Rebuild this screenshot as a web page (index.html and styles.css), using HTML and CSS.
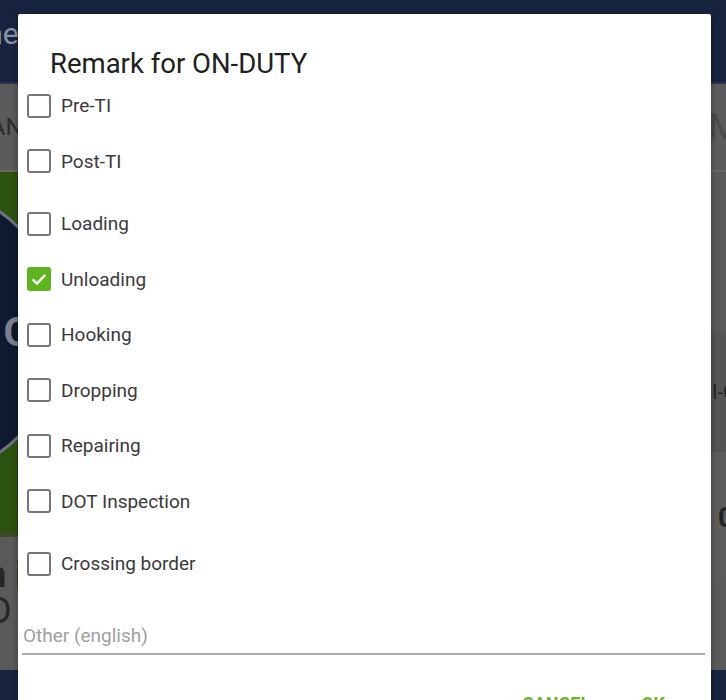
FILE: index.html
```html
<!DOCTYPE html>
<html lang="en">
<head>
    <meta charset="UTF-8">
    <meta name="viewport" content="width=device-width, initial-scale=1.0">
    <title>Remark for ON-DUTY</title>
    <link rel="stylesheet" href="styles.css">
</head>
<body>
    <!-- dimmed app behind the dialog -->
    <div class="app">
        <header class="app-bar">
            <span class="app-title">Home</span>
        </header>
        <div class="tab-bar">
            <span class="tab-left">SCAN</span>
            <span class="tab-right">M</span>
        </div>
        <div class="app-body">
            <div class="status-col">
                <div class="status-panel">
                    <div class="status-circle"><span>OFF</span></div>
                </div>
                <div class="status-info">
                    <span class="info-line big">n i</span>
                    <span class="info-line">-D</span>
                </div>
            </div>
            <div class="side-col">
                <div class="side-block dark"><span>I-C</span></div>
                <div class="side-block"><span class="num">0</span></div>
            </div>
        </div>
        <footer class="app-footer"></footer>
    </div>

    <div class="dialog">
        <h2 class="dialog-title">Remark for ON-DUTY</h2>
        <div class="options">
            <label class="option"><span class="box"></span>Pre-TI</label>
            <label class="option"><span class="box"></span>Post-TI</label>
            <label class="option spaced"><span class="box"></span>Loading</label>
            <label class="option"><span class="box checked">
                <svg viewBox="0 0 24 24" width="24" height="24"><path d="M4.5 12.5l5 5L19.5 7" fill="none" stroke="#fff" stroke-width="2.8"/></svg>
            </span>Unloading</label>
            <label class="option"><span class="box"></span>Hooking</label>
            <label class="option"><span class="box"></span>Dropping</label>
            <label class="option"><span class="box"></span>Repairing</label>
            <label class="option"><span class="box"></span>DOT Inspection</label>
            <label class="option spaced"><span class="box"></span>Crossing border</label>
        </div>
        <div class="other-field">
            <input type="text" placeholder="Other (english)">
        </div>
        <div class="dialog-actions">
            <button type="button">CANCEL</button>
            <button type="button">OK</button>
        </div>
    </div>
</body>
</html>
```

FILE: styles.css
```css
body {
    margin: 0;
    font-family: Roboto, "Liberation Sans", sans-serif;
    overflow: hidden;
    height: 700px;
    position: relative;
    background: #5a5a5a;
}
.app {
    height: 700px;
    display: flex;
    flex-direction: column;
}
.app-bar {
    height: 82px;
    background: #18233f;
    border-bottom: 2px solid #2a3450;
    display: flex;
    align-items: flex-start;
}
.app-title {
    color: #8a93a8;
    font-size: 30px;
    margin: 16px 0 0 -62px;
}
.tab-bar {
    height: 86px;
    background: #5b5b5b;
    border-bottom: 2px solid #666;
    display: flex;
    justify-content: space-between;
    align-items: center;
    color: #2c2c2c;
    font-size: 24px;
}
.tab-left {
    margin-left: -40px;
}
.tab-right {
    color: #4a4a4a;
    font-size: 36px;
    margin-right: -14px;
}
.app-body {
    flex: 1;
    display: flex;
}
.status-col {
    width: 50%;
    display: flex;
    flex-direction: column;
}
.status-panel {
    height: 365px;
    background: #2c520f;
    display: flex;
    align-items: center;
    border-bottom: 5px solid #3c4a2a;
    box-sizing: border-box;
    overflow: hidden;
}
.status-circle {
    width: 290px;
    height: 290px;
    border-radius: 50%;
    background: #0f1a30;
    border: 3px solid #6a7180;
    margin-left: -232px;
    margin-top: -40px;
    display: flex;
    align-items: center;
    justify-content: flex-end;
    color: #7a8090;
    font-size: 40px;
    font-weight: bold;
}
.status-circle span {
    margin-right: -14px;
}
.status-info {
    flex: 1;
    background: #595959;
    display: flex;
    flex-direction: column;
    color: #262626;
    padding-top: 20px;
}
.info-line {
    font-size: 36px;
    margin-left: -22px;
    line-height: 36px;
}
.info-line.big {
    font-weight: bold;
    margin-left: -14px;
}
.side-col {
    flex: 1;
    display: flex;
    flex-direction: column;
}
.side-block {
    height: 130px;
    background: #5c5c5c;
    display: flex;
    align-items: center;
    justify-content: flex-end;
    color: #222;
    font-size: 20px;
}
.side-block.dark {
    height: 120px;
    margin-top: 160px;
    background: #545454;
}
.side-block span {
    margin-right: -10px;
}
.side-block .num {
    font-size: 28px;
    font-weight: bold;
    margin-right: -8px;
}
.app-footer {
    height: 30px;
    background: #18233f;
}

/* dialog */
.dialog {
    position: absolute;
    left: 18px;
    top: 14px;
    width: 693px;
    height: 740px;
    background: #fff;
    border-radius: 2px;
    box-shadow: 0 2px 6px rgba(0, 0, 0, 0.4);
    padding-top: 36px;
    box-sizing: border-box;
}
.dialog-title {
    margin: 0 0 0 32px;
    font-size: 27.5px;
    font-weight: normal;
    line-height: 28px;
    color: #212121;
}
.options {
    display: flex;
    flex-direction: column;
    padding-left: 9px;
}
.option {
    height: 55.5px;
    display: flex;
    align-items: center;
    gap: 10px;
    font-size: 19px;
    color: #3a3a3a;
}
.option.spaced {
    margin-top: 7px;
}
.box {
    width: 20px;
    height: 20px;
    border: 2px solid #777;
    border-radius: 3px;
    display: flex;
    align-items: center;
    justify-content: center;
}
.box.checked {
    background: #5db41e;
    border-color: #5db41e;
}
.other-field {
    margin: 27px 6px 0 4px;
}
.other-field input {
    width: 100%;
    height: 36px;
    border: none;
    border-bottom: 2px solid #ababab;
    padding: 0 1px;
    font-family: inherit;
    font-size: 19px;
    outline: none;
    box-sizing: border-box;
}
.other-field input::placeholder {
    color: #a0a0a0;
}
.dialog-actions {
    display: flex;
    justify-content: flex-end;
    gap: 39px;
    padding: 38px 40px 0 0;
}
.dialog-actions button {
    background: none;
    border: none;
    color: #6ab52c;
    font-family: inherit;
    font-size: 18px;
    font-weight: bold;
    padding: 0 6px;
}
```
